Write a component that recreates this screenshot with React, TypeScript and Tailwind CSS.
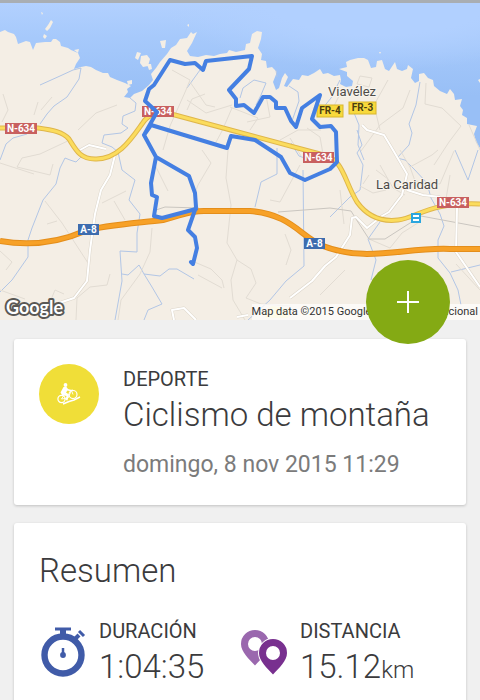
import React from 'react'

type Shield = { x: number, y: number, w: number, h: number, text: string, kind: 'national' | 'motorway' | 'regional' }

const shields: Shield[] = [
    {x: 5, y: 123, w: 32, h: 11, text: 'N-634', kind: 'national'},
    {x: 142, y: 106, w: 32, h: 11, text: 'N-634', kind: 'national'},
    {x: 303, y: 152, w: 31, h: 11, text: 'N-634', kind: 'national'},
    {x: 437, y: 197, w: 32, h: 11, text: 'N-634', kind: 'national'},
    {x: 78, y: 224, w: 21, h: 11, text: 'A-8', kind: 'motorway'},
    {x: 304, y: 238, w: 21, h: 11, text: 'A-8', kind: 'motorway'},
    {x: 317, y: 105, w: 26, h: 12, text: 'FR-4', kind: 'regional'},
    {x: 349, y: 102, w: 27, h: 12, text: 'FR-3', kind: 'regional'},
]

const shieldStyles = {
    national: {box: 'fill-[#c8605f]', text: 'fill-white'},
    motorway: {box: 'fill-[#3d6cae]', text: 'fill-white'},
    regional: {box: 'fill-[#f8d93c] stroke-[#d8b62c]', text: 'fill-[#4a3d10]'},
}

const coast = 'M0 32L5 30L8 32L14 34L16 37L18 44L26 41L30 42L33 50L36 43L45 42L51 42L53 39L56 39L60 42L61 46L68 48L71 50L78 53L80 58L76 64L74 69L81 67L86 66L91 67L96 70L103 73L108 73L110 77L117 80L125 83L131 86L127 89L128 92L124 97L130 98L134 94L142 91L149 85L153 80L151 74L156 68L160 62L167 54L171 48L176 45L180 39L187 38L191 32L193 34L197 32L192 43L187 51L190 56L198 57L206 55L214 56L220 54L227 53L229 50L236 52L245 50L246 44L250 43L252 34L257 31L262 32L261 39L258 48L262 54L261 60L266 61L267 68L272 67L277 72L273 82L276 90L279 88L282 78L285 73L288 77L284 86L287 87L293 79L299 80L302 75L308 76L314 73L320 69L323 74L328 73L334 76L340 75L341 80L340 84L346 87L352 86L353 81L347 76L347 72L339 69L347 67L346 62L350 60L358 58L364 58L368 60L371 68L376 67L377 61L382 60L385 69L389 71L395 62L397 69L402 71L407 69L408 65L413 69L411 78L415 83L419 81L419 74L424 73L428 78L433 80L434 86L440 91L447 94L450 89L454 94L455 100L462 99L460 106L463 110L462 115L467 118L467 124L477 126L474 134L476 142L480 148V320H0Z'

const track = 'M191 262L193 264L197 248L195 237L188 230L196 207L195 193L189 176L156 157L144 135L157 112L145 101L149 89L154 85L170 60L185 64L195 63L203 70L206 61L252 56L249 69L229 90L236 99L236 106L244 105L254 113L263 97L270 97L276 102L276 108L285 108L291 121L296 127L302 108L320 95L312 119L320 127L331 126L336 132L337 162L330 169L305 180L290 173L281 157L255 140L231 136L227 148L151 125L144 135M156 157L151 183L152 195L157 197L154 216L162 218L196 209'

const road634 = 'M0 128H38C53 130 63 132 69 139C76 150 80 159 95 159C118 160 132 138 142 124C148 114 157 111 175 115L320 154C344 158 343 179 357 202C367 216 381 222 398 220C417 218 428 202 480 204'

const roadA8 = 'M0 241C35 247 62 241 85 231C105 225 139 223 163 220C183 215 188 211 204 211H250C291 214 301 237 323 246C367 263 404 247 450 249H480'

const localRoads = 'M115 155L110 175L101 190L95 214L90 250L87 281L74 298L59 303M362 125L367 130L384 135L393 150L407 174L402 195L389 212L382 216L367 228L356 217L352 218L350 235L336 257L325 266L312 281L290 298M407 190L423 195L440 197M457 208L456 252L480 287M80 150L89 145L106 149M174 320L172 310L184 308L196 320M237 317L248 315'

export default function App() {
    return (
        <main className="min-h-screen overflow-hidden bg-[#f0f0f0] font-['Roboto',sans-serif] text-[#3b3b3d]">
            <section className="relative" aria-label="Mapa del recorrido">
                <RouteMap/>
                <p className="absolute right-0 bottom-0 bg-white/70 pr-0.5 text-[11px] leading-4 whitespace-nowrap text-[#333]">
                    Map data ©2015 Google, Inst. Geogr. Nacional
                </p>
                <button
                    type="button"
                    aria-label="Añadir"
                    className="absolute right-[30px] -bottom-6 flex h-21 w-21 items-center justify-center rounded-full bg-[#84aa14]"
                >
                    <svg viewBox="0 0 22 22" className="h-[22px] w-[22px] fill-none stroke-white stroke-2">
                        <path d="M11 0V22M0 11H22"/>
                    </svg>
                </button>
            </section>

            <div className="flex flex-col gap-[18px] px-3.5 pt-[19px]">
                <section className="flex gap-6 rounded-[3px] bg-white px-[25px] pt-[25px] pb-6 shadow-[0_1px_3px_rgba(0,0,0,0.2)]">
                    <SportIcon/>
                    <div>
                        <p className="pt-[3px] text-xl leading-6">DEPORTE</p>
                        <h1 className="mt-1 text-[33px] leading-10 font-light whitespace-nowrap">Ciclismo de montaña</h1>
                        <p className="mt-3.5 text-[23px] leading-8 whitespace-nowrap text-[#7b7b7b]">
                            <time dateTime="2015-11-08T11:29">domingo, 8 nov 2015 11:29</time>
                        </p>
                    </div>
                </section>

                <section className="rounded-[3px] bg-white px-[25px] pt-7 pb-6 shadow-[0_1px_3px_rgba(0,0,0,0.2)]">
                    <h2 className="text-[33px] leading-10 font-light">Resumen</h2>
                    <dl className="mt-7 grid grid-cols-2">
                        <Stat icon={<StopwatchIcon/>} label="DURACIÓN" value="1:04:35"/>
                        <Stat icon={<PinsIcon/>} label="DISTANCIA" value="15.12" unit="km"/>
                    </dl>
                </section>
            </div>
        </main>
    )
}

function Stat({icon, label, value, unit}: { icon: React.ReactNode, label: string, value: string, unit?: string }) {
    return (
        <div className="flex gap-3">
            {icon}
            <div>
                <dt className="text-xl leading-6">{label}</dt>
                <dd className="text-[33px] leading-12 font-light whitespace-nowrap">
                    {value}{unit && <span className="text-2xl">{unit}</span>}
                </dd>
            </div>
        </div>
    )
}

function RouteMap() {
    return (
        <svg viewBox="0 0 480 320" preserveAspectRatio="xMidYMid slice" className="block h-80 w-full" role="img" aria-label="Mapa">
            <defs>
                <linearGradient id="sea" x1="0" y1="0" x2="0" y2="1">
                    <stop offset="0" stopColor="#b3d1ff"/>
                    <stop offset="0.12" stopColor="#a6c9fb"/>
                    <stop offset="0.3" stopColor="#98bff6"/>
                    <stop offset="1" stopColor="#98bff6"/>
                </linearGradient>
                <radialGradient id="shallow">
                    <stop offset="0.5" stopColor="#b1d0ff"/>
                    <stop offset="1" stopColor="#b1d0ff" stopOpacity="0"/>
                </radialGradient>
            </defs>
            <rect width="480" height="320" fill="url(#sea)"/>
            <ellipse cx="380" cy="0" rx="220" ry="70" fill="url(#shallow)"/>
            <rect width="480" height="3" fill="#a9aeb3"/>

            {/* land and islets */}
            <g fill="#f4eee5">
                <path d={coast}/>
                <path d="M51 20L53 22L50 28L47 31L45 29L48 25ZM44 34L47 36L45 39L43 37ZM41 12L43 13L42 15ZM74 50L79 49L78 53ZM137 52L141 53L138 60L135 58ZM141 56L147 55L150 59L148 66L143 67L140 63ZM147 64L151 64L152 69L149 70ZM160 41L166 40L165 48L162 48ZM127 81L132 80L132 84L128 85ZM187 25L189 24L189 27ZM379 52L381 52L380 54ZM478 80L480 79V83Z"/>
            </g>

            {/* streams */}
            <g fill="none" stroke="#b2c6e6" strokeWidth="1">
                <path d="M40 85L60 76L73 70L81 68L79 79L67 97L54 106L47 114L40 124M27 134L13 138L6 144L0 160M82 156L76 162L70 160L65 158L60 168L56 184L43 200L32 228L28 240V257L12 280L0 292"/>
                <path d="M130 98L136 103L135 111L123 116L122 124L128 128L121 133L104 135L102 143L112 147L118 152L122 170L135 180L129 200L140 214L137 233V252L120 251L122 281L115 320M122 274L128 275L139 265L144 274L160 276L169 269L177 269L194 279M144 274L152 287L162 304L148 310L144 320"/>
                <path d="M187 88L200 70L204 66M240 98L243 88L254 80L266 83L261 95L256 105M277 77L276 70M289 86L298 92L299 101L292 121M340 80L331 98L318 114M352 108L359 125L358 145L364 160M420 82L416 105L409 124L412 133L409 145L397 158L405 160L414 169L427 183L431 198L440 214L444 226L438 240V258L450 273L458 290L461 305M277 148V174L261 182L255 207M357 130L362 145L357 153L363 165L360 190L350 197L330 217M480 265L451 272M303 170L304 266L286 281L270 300L248 320M380 222L368 239L376 260L371 280"/>
                <path d="M455 150L468 180L478 150M291 143L299 156L310 160"/>
            </g>

            {/* minor tracks */}
            <g fill="none" stroke="#e2dcd3" strokeWidth="1">
                <path d="M3 94L8 110L2 122M52 97L41 110M38 102L34 115M78 130L96 113L117 105M72 139L40 154L22 158L17 167L50 175L53 164M0 163L34 174M45 201L62 223L88 263M47 224L57 221M102 203L126 191M114 201L125 220M0 251L12 262L6 270M152 228L150 252L140 274L121 300L118 320"/>
                <path d="M172 70L190 80L186 90L170 126L163 150M190 82L206 105L215 107M187 100L206 113L232 105M205 94L192 99L187 110M232 108L222 131L215 144M230 107L258 118L250 130M266 95L270 117L247 122M202 150L211 163L198 185L195 193M228 150L226 178L231 205L227 243L237 260L231 280L233 300L245 320M192 261L211 269L222 280L224 288M237 260L251 269L256 283L246 298L261 304L290 306M222 288L198 275"/>
                <path d="M410 90L403 108L380 125L361 151M426 83L425 104L442 108L461 126L449 142L434 165M388 80L374 105L380 130M360 76L372 78L369 87L357 84ZM469 125L480 150M342 90L333 108M280 140L298 130L321 130M290 138L301 156M307 128L320 137L323 154M376 170L388 179L386 190L373 193L360 186M369 175L363 184M380 165L393 188L405 195M369 239L390 248L402 233L421 221M400 150L410 167L432 155L438 150M410 167L415 181L440 184M440 184L454 151M445 205L450 175M457 208L463 201M0 290L25 299M50 302L55 290L64 294M76 320L77 298L90 287L107 285L110 274M270 200L280 202L300 165M155 165L168 191M285 234L291 250L286 265M345 270L320 295M456 264L480 290M340 190L344 224"/>
                <path stroke="#cac6c0" d="M153 211L165 207L199 208M278 212L330 208L351 211L356 219L369 239L385 239L421 216L480 227"/>
            </g>

            {/* local roads */}
            <g fill="none" strokeLinejoin="round">
                <path d={localRoads} stroke="#dcd5c9" strokeWidth="3"/>
                <path d={localRoads} stroke="#fff" strokeWidth="2"/>
            </g>
            <path d="M264 312L272 306L290 309L288 318L266 318Z" fill="#f7f0b5"/>

            <g fill="none">
                <path d={road634} stroke="#dfb64b" strokeWidth="5"/>
                <path d={road634} stroke="#fbdc5d" strokeWidth="3"/>
                <path d={roadA8} stroke="#e48e1b" strokeWidth="6"/>
                <path d={roadA8} stroke="#f7a127" strokeWidth="4"/>
            </g>

            {shields.map((s) => (
                <g key={`${s.x}-${s.y}`}>
                    <rect x={s.x} y={s.y} width={s.w} height={s.h} className={shieldStyles[s.kind].box}/>
                    <text
                        x={s.x + s.w / 2}
                        y={s.y + 9}
                        textAnchor="middle"
                        className={`text-[10px] font-bold ${shieldStyles[s.kind].text}`}
                    >
                        {s.text}
                    </text>
                </g>
            ))}

            <path d={track} fill="none" stroke="#447fe2" strokeWidth="4" strokeLinejoin="round" strokeLinecap="round"/>

            <g className="fill-[#4d4b48] stroke-[#f8f4ee] stroke-2 text-[13px] [paint-order:stroke]">
                <text x="328" y="96">Viavélez</text>
                <text x="376" y="189">La Caridad</text>
            </g>
            <g>
                <rect x="412" y="214" width="8" height="8" fill="#fff" stroke="#2ba6de" strokeWidth="2"/>
                <path d="M413 218H419" stroke="#2ba6de" strokeWidth="2"/>
            </g>
            <text
                x="6"
                y="314"
                className="fill-white stroke-[#5a5855] stroke-[4px] font-['Lato',sans-serif] text-[18px] font-bold [paint-order:stroke] [stroke-linejoin:round]"
            >
                Google
            </text>
        </svg>
    )
}

function SportIcon() {
    return (
        <div className="flex h-15 w-15 flex-none items-center justify-center rounded-full bg-[#f0de38]">
            <svg viewBox="0 0 24 24" className="h-6 w-6 fill-none stroke-white" aria-hidden="true">
                <circle cx="8.500" cy="3" r="1.900" fill="#fff" stroke="none"/>
                <path d="M6.500 5L3.500 10.500L5 13L9.500 14L8.500 18L10.500 18.500L12 12.500L9 10.500L10.500 8.500L14 9.500L14.500 8L11 7L9.500 5Z" fill="#fff" stroke="none"/>
                <circle cx="4.500" cy="17" r="3.600" strokeWidth="1.200"/>
                <circle cx="16" cy="12.500" r="4" strokeWidth="1.200"/>
                <path d="M4.500 17L7.500 12.500M4.500 17L11 16L14.500 8.500L16 12.500M13 8.500L16 8" strokeWidth="0.900"/>
                <path d="M6 22L12 19.500L17 18L23 15" strokeWidth="1.400"/>
            </svg>
        </div>
    )
}

function StopwatchIcon() {
    return (
        <svg viewBox="0 0 48 60" className="h-15 w-12 flex-none" aria-hidden="true">
            <g fill="none" stroke="#405ba8">
                <circle cx="24" cy="36" r="18.500" strokeWidth="6.400"/>
                <path d="M16 10H32" strokeWidth="3"/>
                <path d="M24 10V16" strokeWidth="6"/>
                <path d="M36 20L40 16" strokeWidth="4"/>
                <path d="M40 12L45 17" strokeWidth="3"/>
                <path d="M24 29V36" strokeWidth="2.500"/>
            </g>
            <circle cx="24" cy="36" r="2.900" fill="#405ba8"/>
        </svg>
    )
}

function PinsIcon() {
    const pin = 'M14 0A14 14 0 0 0 0 14C0 22 8 29 14 35.500C20 29 28 22 28 14A14 14 0 0 0 14 0ZM14 7A7 7 0 1 1 14 21A7 7 0 1 1 14 7Z'
    return (
        <svg viewBox="0 0 48 60" className="h-15 w-12 flex-none" fillRule="evenodd" aria-hidden="true">
            <g transform="translate(1 11)">
                <path d={pin} fill="#9a68ae"/>
            </g>
            <g transform="translate(19 20)">
                <path d="M14 0A14 14 0 0 0 0 14C0 22 8 29 14 35.500C20 29 28 22 28 14A14 14 0 0 0 14 0Z" fill="#fff" stroke="#fff" strokeWidth="2"/>
                <path d={pin} fill="#78308f"/>
            </g>
        </svg>
    )
}
